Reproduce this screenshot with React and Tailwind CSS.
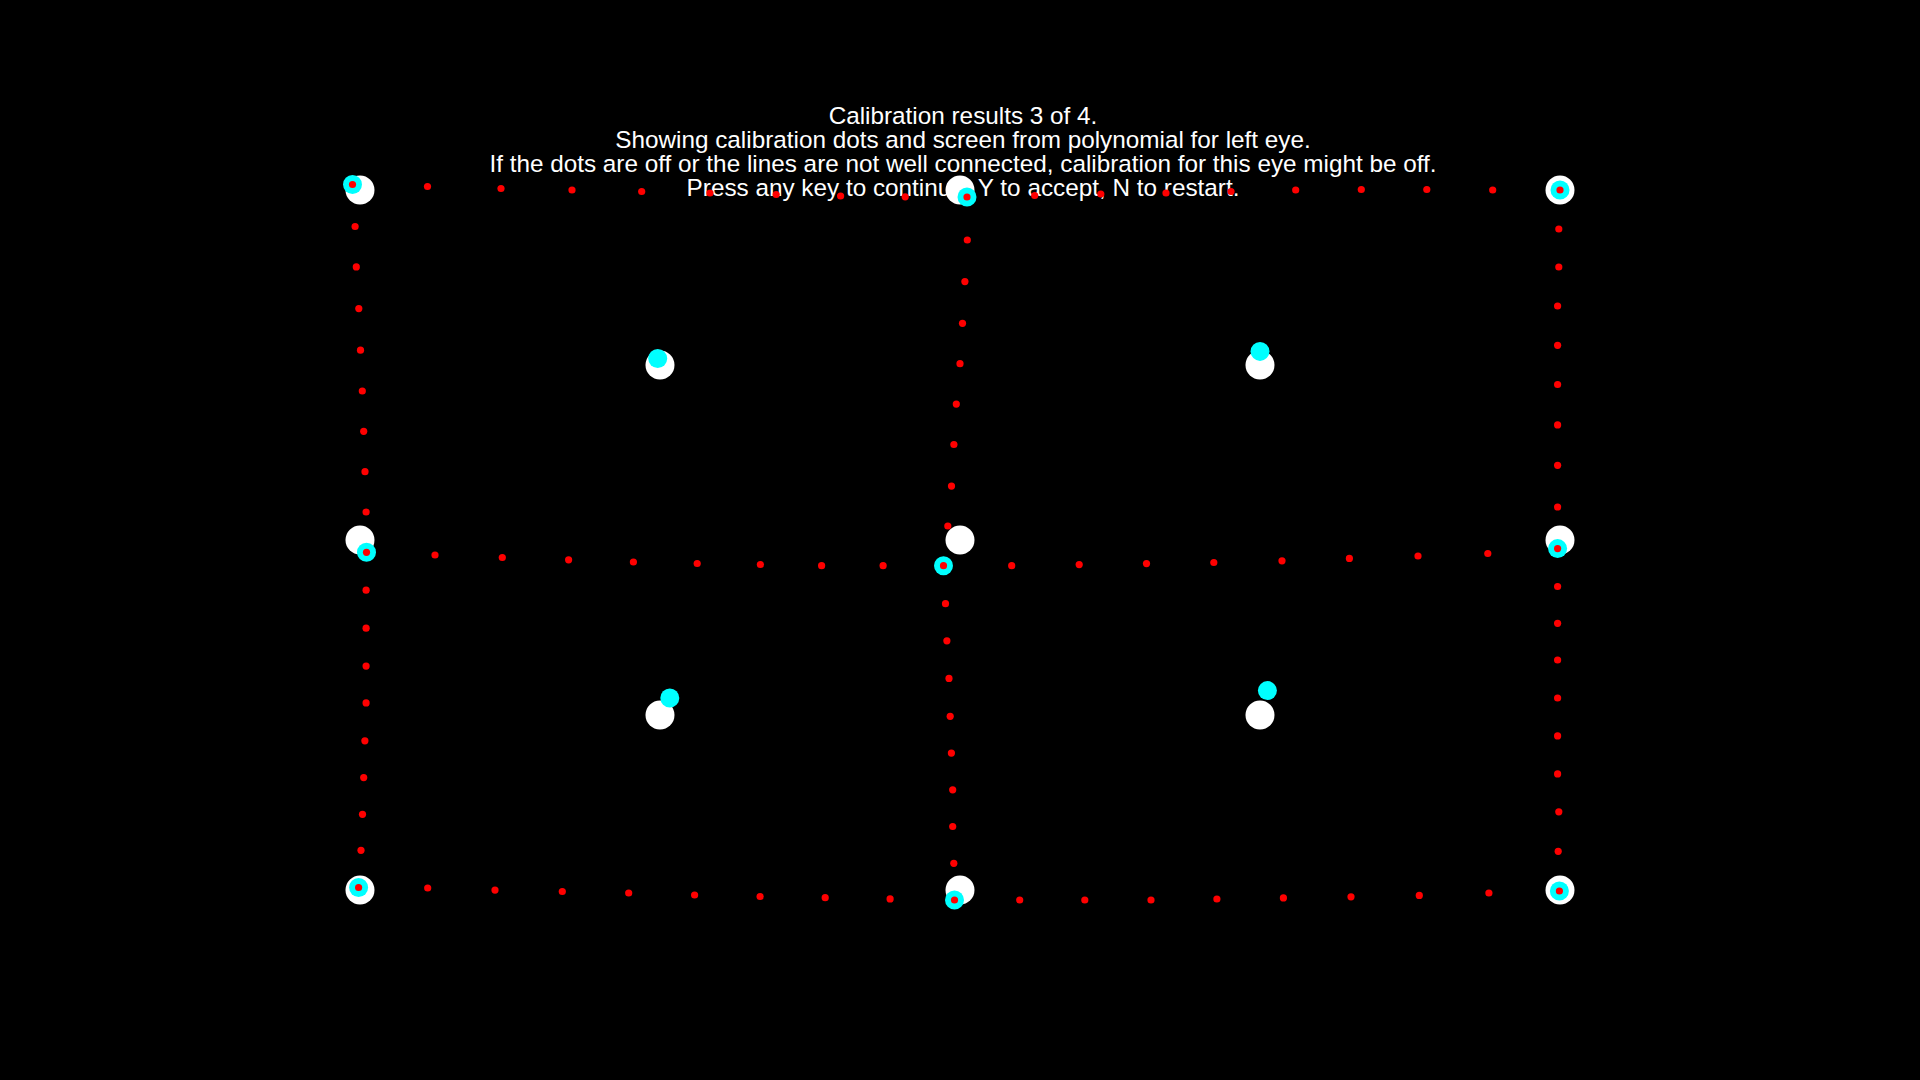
import React from "react";

const whites = [
  [360, 190], [960, 190], [1560, 190],
  [660, 365], [1260, 365],
  [360, 540], [960, 540], [1560, 540],
  [660, 715], [1260, 715],
  [360, 890], [960, 890], [1560, 890],
];

const cyans = [
  [352.5, 184.5], [967, 197], [1560, 190],
  [657.7, 358.5], [1260, 351.4],
  [366.5, 552.3], [943.5, 565.7], [1557.6, 548.6],
  [669.8, 698], [1267.4, 690.6],
  [358.6, 887.5], [954.5, 900], [1559.4, 891],
];

const edgeCyan = [0, 1, 2, 5, 6, 7, 10, 11, 12].map((i) => cyans[i]);

const lines = [
  [[427.5,186.5],[501,188.5],[572,190],[641.7,191.5],[710,193],[776.2,194.5],[840.6,196],[905.2,196.8]],
  [[1034.7,195.5],[1100.8,194],[1166,193],[1231,191.5],[1295.7,190],[1361.3,189.5],[1426.8,189.5],[1492.7,190]],
  [[355.1,226.5],[356.3,266.9],[358.8,308.6],[360.5,350.2],[362.3,391],[363.7,431.3],[365,471.7],[366.1,512]],
  [[366.1,590.2],[366.1,628.2],[366.1,666.1],[366.1,702.9],[364.9,740.8],[363.7,777.6],[362.5,814.3],[361,850.3]],
  [[435,555],[502.3,557.5],[568.6,559.8],[633.4,562],[697.2,563.5],[760.4,564.5],[821.6,565.7],[883.1,565.7]],
  [[1011.7,565.7],[1079.2,564.6],[1146.5,563.6],[1213.8,562.5],[1282,560.8],[1349.4,558.4],[1418,556],[1487.8,553.5]],
  [[967.3,240],[964.9,281.6],[962.5,323.3],[960,363.7],[956.3,404.1],[953.9,444.5],[951.5,486.1],[947.8,526]],
  [[945.5,603.7],[946.9,640.8],[949,678.4],[950.2,716.3],[951.4,753.1],[952.7,789.8],[952.7,826.5],[953.8,863.3]],
  [[1558.8,229],[1558.8,267],[1557.6,306],[1557.6,345.3],[1557.6,384.5],[1557.6,424.9],[1557.6,465.3],[1557.6,507]],
  [[1557.6,586.5],[1557.6,623.3],[1557.6,660],[1557.6,698],[1557.6,735.9],[1557.6,773.9],[1558.8,811.8],[1558.2,851.3]],
  [[427.7,888],[495,890.1],[562.3,891.5],[628.7,893],[694.6,895],[760.1,896.5],[825.2,897.7],[890.1,898.9]],
  [[1019.7,900],[1084.8,900],[1151,900],[1216.9,899],[1283.4,897.9],[1351,896.8],[1419.3,895.4],[1488.9,893]],
];

const reds = [...edgeCyan, ...lines.flat()];

export default function App() {
  return (
    <div className="relative w-[1920px] h-[1080px] bg-black overflow-hidden">
      <div
        className="pt-[104px] pl-[6px] text-center text-white text-[24.3px] leading-[24px]"
        style={{ fontFamily: '"Liberation Sans", Arial, sans-serif' }}
      >
        <div>Calibration results 3 of 4.</div>
        <div>Showing calibration dots and screen from polynomial for left eye.</div>
        <div>If the dots are off or the lines are not well connected, calibration for this eye might be off.</div>
        <div>Press any key to continue. Y to accept, N to restart.</div>
      </div>
      <svg
        className="absolute inset-0"
        width="1920"
        height="1080"
        viewBox="0 0 1920 1080"
      >
        {whites.map(([x, y], i) => (
          <circle key={"w" + i} cx={x} cy={y} r="14.5" fill="#ffffff" />
        ))}
        {cyans.map(([x, y], i) => (
          <circle key={"c" + i} cx={x} cy={y} r="9.5" fill="#00ffff" />
        ))}
        {reds.map(([x, y], i) => (
          <circle key={"r" + i} cx={x} cy={y} r="3.6" fill="#ff0000" />
        ))}
      </svg>
    </div>
  );
}
